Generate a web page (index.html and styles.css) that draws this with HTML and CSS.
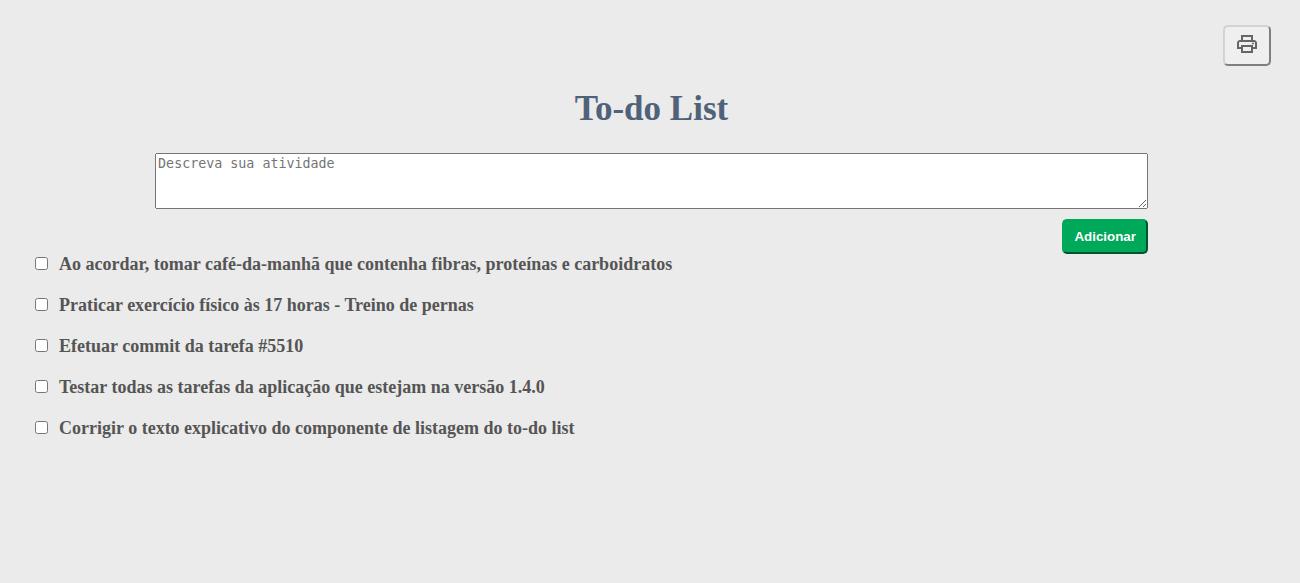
FILE: index.html
```html
<!DOCTYPE html>
<html lang="pt-BR">
<head>
<meta charset="utf-8">
<title>To-do List</title>
<link rel="stylesheet" href="styles.css">
</head>
<body>
<header class="toolbar">
  <button class="print-button" type="button" aria-label="Imprimir">
    <svg class="print-icon" viewBox="0 0 24 24" aria-hidden="true"><path d="M19 8h-1V3H6v5H5c-1.66 0-3 1.34-3 3v6h4v4h12v-4h4v-6c0-1.660-1.340-3-3-3zM8 5h8v3H8V5zm8 12v2H8v-4h8v2zm2-2v-2H6v2H4v-4c0-.55.45-1 1-1h14c.55 0 1 .45 1 1v4h-2z"/><circle cx="18" cy="11.500" r="1"/></svg>
  </button>
</header>
<main>
  <h1 class="title">To-do List</h1>
  <form class="task-form">
    <textarea class="task-input" placeholder="Descreva sua atividade" aria-label="Descreva sua atividade"></textarea>
    <button class="add-button" type="button">Adicionar</button>
  </form>
  <ul class="tasks">
    <li class="task"><input class="task-check" type="checkbox" id="task-1"><label for="task-1">Ao acordar, tomar café-da-manhã que contenha fibras, proteínas e carboidratos</label></li>
    <li class="task"><input class="task-check" type="checkbox" id="task-2"><label for="task-2">Praticar exercício físico às 17 horas - Treino de pernas</label></li>
    <li class="task"><input class="task-check" type="checkbox" id="task-3"><label for="task-3">Efetuar commit da tarefa #5510</label></li>
    <li class="task"><input class="task-check" type="checkbox" id="task-4"><label for="task-4">Testar todas as tarefas da aplicação que estejam na versão 1.4.0</label></li>
    <li class="task"><input class="task-check" type="checkbox" id="task-5"><label for="task-5">Corrigir o texto explicativo do componente de listagem do to-do list</label></li>
  </ul>
</main>
</body>
</html>
```
FILE: styles.css
```css
body {
  margin: 0;
  padding: 25px 28px 25px 31px;
  background: #ebebeb;
  color: #555;
  font-family: "Liberation Serif", "Times New Roman", serif;
}

.toolbar {
  display: flex;
  justify-content: flex-end;
  padding-right: 1px;
}

.print-button {
  display: flex;
  padding: 5px 10px 8px;
  border: 2px outset #d3d3d3;
  border-radius: 5px;
  background: #efefef;
}

.print-icon {
  width: 24px;
  height: 24px;
  fill: #666;
}

.title {
  margin: 23px 0 24px;
  color: #4f6279;
  font-size: 35px;
  line-height: 40px;
  text-align: center;
}

.task-form {
  display: flex;
  flex-direction: column;
  align-items: flex-end;
  gap: 10px;
  width: 80%;
  margin: 0 auto;
}

.task-input {
  box-sizing: border-box;
  width: 100%;
  height: 56px;
  padding: 2px;
  font-family: monospace;
}

.add-button {
  height: 35px;
  padding: 0 10px;
  border: 2px outset #00a859;
  border-radius: 5px;
  background: #00a859;
  color: #fff;
  font-family: "Liberation Sans", Arial, sans-serif;
  font-weight: bold;
}

.tasks {
  display: grid;
  gap: 20px;
  margin: 0;
  padding: 0;
  list-style: none;
}

.task {
  display: flex;
  align-items: center;
  gap: 11px;
  font-size: 18px;
  font-weight: bold;
  line-height: 21px;
}

.task-check {
  width: 13px;
  height: 13px;
  margin: 0 0 2px 4px;
}
```
